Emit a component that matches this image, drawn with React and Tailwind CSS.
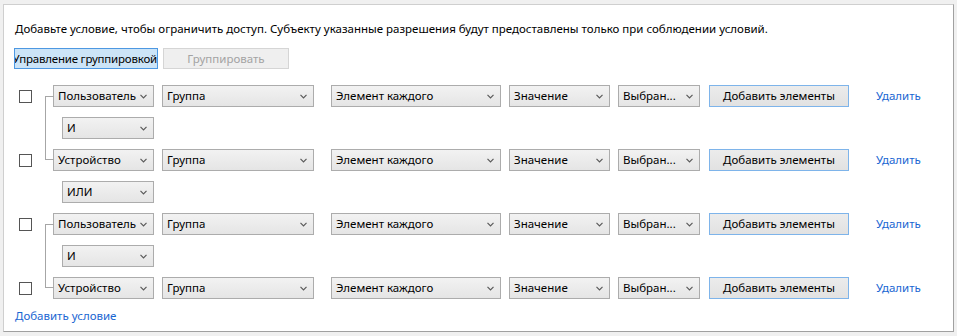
import React from 'react';

const font = { fontFamily: '"Noto Sans", "Open Sans", sans-serif' };

function Chevron() {
  return (
    <svg width="7" height="5" viewBox="0 0 7 5" className="shrink-0">
      <path d="M0.5 0.8 L3.5 3.8 L6.5 0.8" fill="none" stroke="#5a5a5a" strokeWidth="1.2" />
    </svg>
  );
}

function Select({ value, w }) {
  return (
    <div
      className={`${w} h-[22px] shrink-0 flex items-center justify-between pl-[4px] pr-[6px] border border-[#acacac] bg-gradient-to-b from-[#f2f2f2] to-[#e5e5e5] text-black`}
    >
      <span className="whitespace-nowrap">{value}</span>
      <Chevron />
    </div>
  );
}

function Row({ subject }) {
  return (
    <div className="flex items-center h-[22px]">
      <div className="ml-[15px] w-[13px] h-[13px] border border-[#555] bg-white shrink-0" />
      <div className="w-[21px] shrink-0" />
      <Select value={subject} w="w-[101px]" />
      <div className="w-[8px] shrink-0" />
      <Select value="Группа" w="w-[152px]" />
      <div className="w-[17px] shrink-0" />
      <Select value="Элемент каждого" w="w-[170px]" />
      <div className="w-[8px] shrink-0" />
      <Select value="Значение" w="w-[101px]" />
      <div className="w-[8px] shrink-0" />
      <Select value="Выбран..." w="w-[82px]" />
      <div className="w-[9px] shrink-0" />
      <button className="w-[140px] h-[22px] shrink-0 border border-[#7eb4ea] bg-gradient-to-b from-[#ececec] to-[#e2e2e2] text-black">
        Добавить элементы
      </button>
      <a className="ml-[27px] text-[#1a66d2] cursor-pointer">Удалить</a>
    </div>
  );
}

function Operator({ value }) {
  return (
    <div className="flex items-center h-[22px] pl-[58px]">
      <Select value={value} w="w-[92px]" />
    </div>
  );
}

function Group({ a, op, b }) {
  return (
    <div className="relative flex flex-col gap-[10px]">
      <div className="absolute left-[41px] top-[11px] bottom-[11px] w-[9px] border-l border-t border-b border-[#a6a6a6]" />
      <Row subject={a} />
      <Operator value={op} />
      <Row subject={b} />
    </div>
  );
}

export default function App() {
  return (
    <div className="w-[957px] h-[336px] bg-[#f0f0f0] pt-[4px] pl-[3px] text-[11.5px] leading-[16px]" style={font}>
      <div className="w-[951px] h-[328px] bg-white border border-t-[#cfcfcf] border-l-[#cfcfcf] border-r-[#a0a0a0] border-b-[#a0a0a0] pt-[16px]">
        <div className="pl-[11px] text-black whitespace-nowrap">
          Добавьте условие, чтобы ограничить доступ. Субъекту указанные разрешения будут предоставлены только при соблюдении условий.
        </div>
        <div className="flex mt-[11px] pl-[10px] gap-[5px]">
          <div className="w-[144px] h-[21px] flex items-center justify-end overflow-hidden whitespace-nowrap border border-[#4d98e2] bg-[#cce4f7] text-black tracking-[-0.2px]">
            Управление группировкой
          </div>
          <div className="w-[126px] h-[21px] flex items-center justify-center border border-[#d5d5d5] bg-[#efefef] text-[#a3a3a3]">
            Группировать
          </div>
        </div>
        <div className="mt-[16px] flex flex-col gap-[10px]">
          <Group a="Пользователь" op="И" b="Устройство" />
          <Operator value="ИЛИ" />
          <Group a="Пользователь" op="И" b="Устройство" />
        </div>
        <a className="block mt-[9px] pl-[11px] text-[#1a66d2] cursor-pointer">Добавить условие</a>
      </div>
    </div>
  );
}
